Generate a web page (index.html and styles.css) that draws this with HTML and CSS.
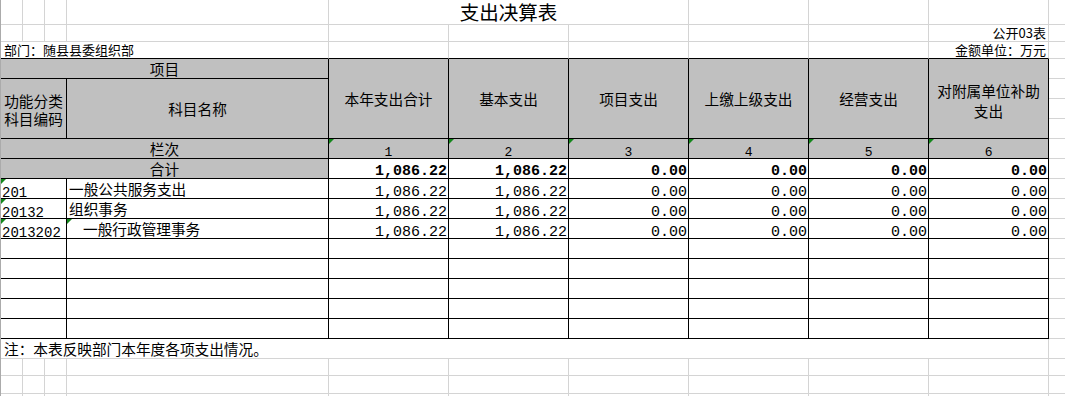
FILE: index.html
```html
<!DOCTYPE html>
<html lang="zh-CN">
<head>
<meta charset="utf-8">
<title>支出决算表</title>
<link rel="stylesheet" href="styles.css">
</head>
<body>
<table class="sheet">
  <colgroup>
    <col class="w22"><col class="w22"><col class="w22"><col class="w262">
    <col class="w120"><col class="w120"><col class="w120"><col class="w120"><col class="w120"><col class="w120">
    <col class="wx">
  </colgroup>
  <tbody>
    <tr class="h25">
      <td></td><td></td><td></td><td></td>
      <td colspan="3" class="title">支出决算表</td>
      <td></td><td></td><td></td><td class="ext"></td>
    </tr>
    <tr class="h17">
      <td></td><td></td><td></td><td></td>
      <td></td><td></td><td></td><td></td><td></td>
      <td class="small right">公开03表</td><td class="ext"></td>
    </tr>
    <tr class="h17 topline">
      <td colspan="4" class="small left">部门：随县县委组织部</td>
      <td></td><td></td><td></td><td></td><td></td>
      <td class="small right">金额单位：万元</td><td class="ext"></td>
    </tr>
    <tr class="h20 boxed">
      <td colspan="4" class="hd center">项目</td>
      <td rowspan="4" class="hd center mid">本年支出合计</td>
      <td rowspan="4" class="hd center mid">基本支出</td>
      <td rowspan="4" class="hd center mid">项目支出</td>
      <td rowspan="4" class="hd center mid">上缴上级支出</td>
      <td rowspan="4" class="hd center mid">经营支出</td>
      <td rowspan="4" class="hd center mid two">对附属单位补助<br>支出</td>
      <td class="ext"></td>
    </tr>
    <tr class="h20 boxed">
      <td colspan="3" rowspan="3" class="hd center mid code-hd">功能分类<br>科目编码</td>
      <td rowspan="3" class="hd center mid">科目名称</td>
      <td class="ext"></td>
    </tr>
    <tr class="h20 boxed"><td class="ext"></td></tr>
    <tr class="h20 boxed"><td class="ext"></td></tr>
    <tr class="h20 boxed">
      <td colspan="4" class="hd center">栏次</td>
      <td class="hd center num-hd tri">1</td>
      <td class="hd center num-hd tri">2</td>
      <td class="hd center num-hd tri">3</td>
      <td class="hd center num-hd tri">4</td>
      <td class="hd center num-hd tri">5</td>
      <td class="hd center num-hd tri">6</td>
      <td class="ext"></td>
    </tr>
    <tr class="h20 boxed">
      <td colspan="4" class="hd center">合计</td>
      <td class="num bold">1,086.22</td>
      <td class="num bold">1,086.22</td>
      <td class="num bold">0.00</td>
      <td class="num bold">0.00</td>
      <td class="num bold">0.00</td>
      <td class="num bold">0.00</td>
      <td class="ext"></td>
    </tr>
    <tr class="h20 boxed">
      <td colspan="3" class="code tri">201</td>
      <td class="name">一般公共服务支出</td>
      <td class="num">1,086.22</td>
      <td class="num">1,086.22</td>
      <td class="num">0.00</td>
      <td class="num">0.00</td>
      <td class="num">0.00</td>
      <td class="num">0.00</td>
      <td class="ext"></td>
    </tr>
    <tr class="h20 boxed">
      <td colspan="3" class="code tri">20132</td>
      <td class="name">组织事务</td>
      <td class="num">1,086.22</td>
      <td class="num">1,086.22</td>
      <td class="num">0.00</td>
      <td class="num">0.00</td>
      <td class="num">0.00</td>
      <td class="num">0.00</td>
      <td class="ext"></td>
    </tr>
    <tr class="h20 boxed">
      <td colspan="3" class="code tri">2013202</td>
      <td class="name indent tri">一般行政管理事务</td>
      <td class="num">1,086.22</td>
      <td class="num">1,086.22</td>
      <td class="num">0.00</td>
      <td class="num">0.00</td>
      <td class="num">0.00</td>
      <td class="num">0.00</td>
      <td class="ext"></td>
    </tr>
    <tr class="h20 boxed">
      <td colspan="3"></td><td></td><td></td><td></td><td></td><td></td><td></td><td></td><td class="ext"></td>
    </tr>
    <tr class="h20 boxed">
      <td colspan="3"></td><td></td><td></td><td></td><td></td><td></td><td></td><td></td><td class="ext"></td>
    </tr>
    <tr class="h20 boxed">
      <td colspan="3"></td><td></td><td></td><td></td><td></td><td></td><td></td><td></td><td class="ext"></td>
    </tr>
    <tr class="h20 boxed">
      <td colspan="3"></td><td></td><td></td><td></td><td></td><td></td><td></td><td></td><td class="ext"></td>
    </tr>
    <tr class="h20 boxed">
      <td colspan="3"></td><td></td><td></td><td></td><td></td><td></td><td></td><td></td><td class="ext"></td>
    </tr>
    <tr class="h20">
      <td colspan="10" class="note">注：本表反映部门本年度各项支出情况。</td>
      <td class="ext"></td>
    </tr>
    <tr class="h17">
      <td></td><td></td><td></td><td></td><td></td><td></td><td></td><td></td><td></td><td></td><td class="ext"></td>
    </tr>
    <tr class="h18">
      <td></td><td></td><td></td><td></td><td></td><td></td><td></td><td></td><td></td><td></td><td class="ext"></td>
    </tr>
    <tr class="h20">
      <td></td><td></td><td></td><td></td><td></td><td></td><td></td><td></td><td></td><td></td><td class="ext"></td>
    </tr>
  </tbody>
</table>
</body>
</html>
```

FILE: styles.css
```css
html, body {
  margin: 0;
  padding: 0;
  background: #ffffff;
  overflow: hidden;
}

body {
  font-family: "Noto Sans CJK SC", "Noto Sans", sans-serif;
  color: #000000;
}

.sheet {
  border-collapse: separate;
  border-spacing: 0;
  table-layout: fixed;
  width: 1149px;
  border-left: 1px solid #ababab;
}

.w22 { width: 22px; }
.w262 { width: 262px; }
.w120 { width: 120px; }
.wx { width: 100px; }

.h25 { height: 25px; }
.h17 { height: 17px; }
.h18 { height: 18px; }
.h20 { height: 20px; }

.sheet td {
  box-sizing: border-box;
  border-right: 1px solid #d4d4d4;
  border-bottom: 1px solid #d4d4d4;
  padding: 0;
  font-size: 14.67px;
  line-height: 19px;
  vertical-align: bottom;
  white-space: nowrap;
  position: relative;
}

.sheet td.ext {
  border-right: none;
}

/* bordered block */
.topline td {
  border-bottom-color: #000000;
}
.topline td.ext {
  border-bottom-color: #d4d4d4;
}

.boxed td {
  border-right-color: #000000;
  border-bottom-color: #000000;
}
.boxed td.ext {
  border-bottom-color: #d4d4d4;
}

.title {
  font-size: 19.5px !important;
  line-height: 24px !important;
  text-align: center;
  vertical-align: middle !important;
}

.small {
  font-size: 13px !important;
  line-height: 16px !important;
  vertical-align: middle !important;
}

.left { text-align: left; padding-left: 3px !important; }
.right { text-align: right; padding-right: 2px !important; }
.center { text-align: center; }

.hd {
  background: #c0c0c0;
}

.mid {
  vertical-align: middle !important;
}

.two {
  white-space: normal !important;
  line-height: 20px !important;
  padding-top: 4px !important;
}

.code-hd {
  line-height: 18px !important;
  padding-top: 2px !important;
}

.num-hd {
  font-family: "Liberation Mono", monospace;
  font-size: 13px !important;
  line-height: 10px !important;
}

.num {
  font-family: "Liberation Mono", monospace;
  font-size: 15px !important;
  line-height: 11px !important;
  text-align: right;
  padding-right: 1px !important;
}

.bold {
  font-weight: bold;
  line-height: 12px !important;
}

.code {
  font-family: "Liberation Mono", monospace;
  font-size: 14px !important;
  line-height: 10px !important;
  text-align: left;
  padding-left: 1px !important;
}

.name {
  text-align: left;
  padding-left: 2px !important;
}

.indent {
  padding-left: 16px !important;
}

.note {
  text-align: left;
  padding-left: 3px !important;
  line-height: 19px !important;
  vertical-align: middle !important;
}

.tri::before {
  content: "";
  position: absolute;
  left: 0;
  top: 0;
  width: 0;
  height: 0;
  border-top: 5px solid #15871c;
  border-right: 5px solid transparent;
}
```
